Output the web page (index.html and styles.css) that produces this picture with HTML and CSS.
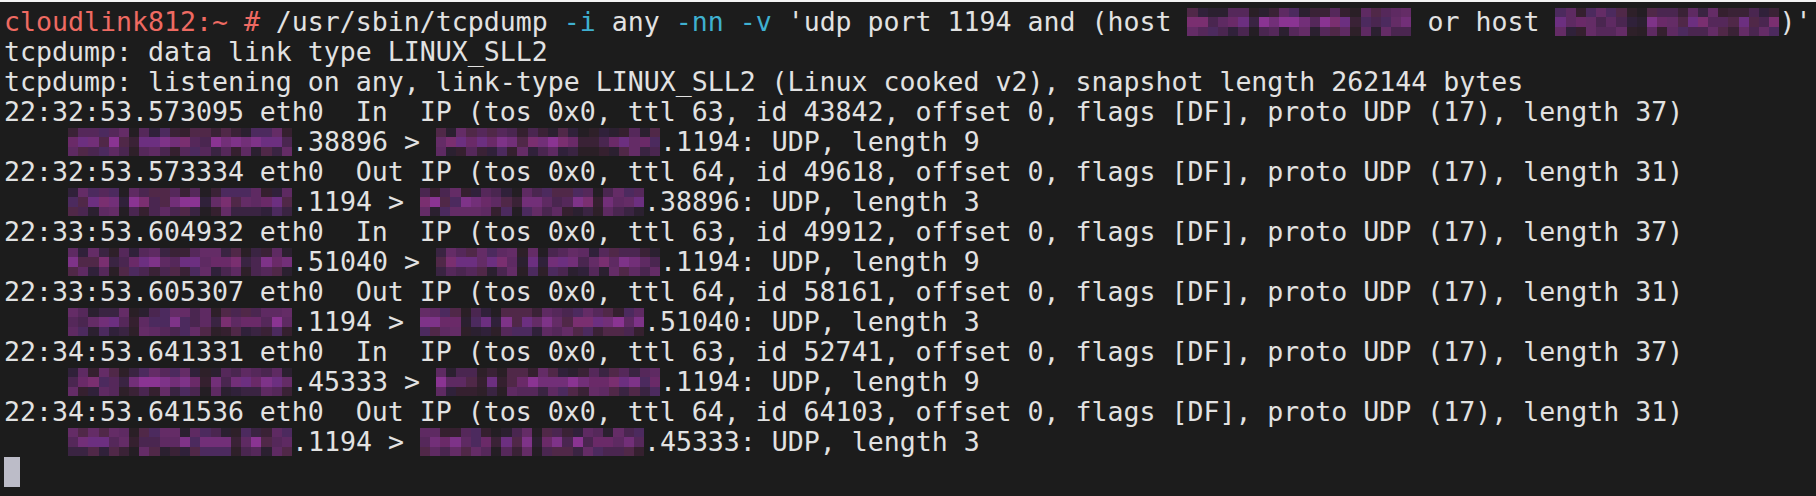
FILE: index.html
```html
<!DOCTYPE html>
<html lang="en">
<head>
<meta charset="utf-8">
<title>tcpdump</title>
<link rel="stylesheet" href="styles.css">
<script src="script.js" defer></script>
</head>
<body>
<main class="term">
<div class="line"><span class="prompt">cloudlink812:~ #</span> /usr/sbin/tcpdump <span class="opt">-i</span> any <span class="opt">-nn</span> <span class="opt">-v</span> 'udp port 1194 and (host <span class="redact" data-seed="11"></span> or host <span class="redact" data-seed="12"></span>)'</div>
<div class="line">tcpdump: data link type LINUX_SLL2</div>
<div class="line">tcpdump: listening on any, link-type LINUX_SLL2 (Linux cooked v2), snapshot length 262144 bytes</div>
<div class="line">22:32:53.573095 eth0  In  IP (tos 0x0, ttl 63, id 43842, offset 0, flags [DF], proto UDP (17), length 37)</div>
<div class="line">    <span class="redact" data-seed="21"></span>.38896 &gt; <span class="redact" data-seed="22"></span>.1194: UDP, length 9</div>
<div class="line">22:32:53.573334 eth0  Out IP (tos 0x0, ttl 64, id 49618, offset 0, flags [DF], proto UDP (17), length 31)</div>
<div class="line">    <span class="redact" data-seed="31"></span>.1194 &gt; <span class="redact" data-seed="32"></span>.38896: UDP, length 3</div>
<div class="line">22:33:53.604932 eth0  In  IP (tos 0x0, ttl 63, id 49912, offset 0, flags [DF], proto UDP (17), length 37)</div>
<div class="line">    <span class="redact" data-seed="41"></span>.51040 &gt; <span class="redact" data-seed="42"></span>.1194: UDP, length 9</div>
<div class="line">22:33:53.605307 eth0  Out IP (tos 0x0, ttl 64, id 58161, offset 0, flags [DF], proto UDP (17), length 31)</div>
<div class="line">    <span class="redact" data-seed="51"></span>.1194 &gt; <span class="redact" data-seed="52"></span>.51040: UDP, length 3</div>
<div class="line">22:34:53.641331 eth0  In  IP (tos 0x0, ttl 63, id 52741, offset 0, flags [DF], proto UDP (17), length 37)</div>
<div class="line">    <span class="redact" data-seed="61"></span>.45333 &gt; <span class="redact" data-seed="62"></span>.1194: UDP, length 9</div>
<div class="line">22:34:53.641536 eth0  Out IP (tos 0x0, ttl 64, id 64103, offset 0, flags [DF], proto UDP (17), length 31)</div>
<div class="line">    <span class="redact" data-seed="71"></span>.1194 &gt; <span class="redact" data-seed="72"></span>.45333: UDP, length 3</div>
<div class="line"><span class="cursor"></span></div>
</main>
</body>
</html>
```
FILE: styles.css
```css
html, body {
  margin: 0;
  padding: 0;
  background: #1c1c1c;
}

body {
  width: 1816px;
  height: 496px;
  overflow: hidden;
  border-top: 2px solid #f3f3f3;
  box-sizing: border-box;
}

.term {
  padding: 5px 0 0 4px;
  font-family: "DejaVu Sans Mono", "Liberation Mono", monospace;
  font-size: 26.576px;
  line-height: 30px;
  color: #e2e2e2;
}

.line {
  white-space: pre;
  height: 30px;
}

.prompt {
  color: #ee6a62;
}

.opt {
  color: #3fb0d0;
}

.redact {
  display: inline-grid;
  grid-template-columns: repeat(22, 1fr);
  grid-template-rows: repeat(3, 1fr);
  width: 224px;
  height: 28px;
  vertical-align: top;
  margin-top: 1px;
}

.cell {
  display: block;
}

.cursor {
  display: inline-block;
  width: 16px;
  height: 30px;
  vertical-align: top;
  background: #bcbcc8;
}
```
FILE: script.js
```js
(function () {
  function rng(seed) {
    var a = seed * 2654435761 >>> 0;
    return function () {
      a |= 0; a = a + 0x6D2B79F5 | 0;
      var t = Math.imul(a ^ a >>> 15, 1 | a);
      t = t + Math.imul(t ^ t >>> 7, 61 | t) ^ t;
      return ((t ^ t >>> 14) >>> 0) / 4294967296;
    };
  }
  var dark = ['#2b2030', '#30213a', '#3a2442', '#35202f', '#3a2236'];
  var mid = ['#4a2650', '#55285a', '#5e2a62', '#4c2a5e', '#642c66', '#502848'];
  var bright = ['#722f78', '#7e3388', '#8a3492', '#6c2f80', '#7a2f70', '#6a2a68'];
  var gap = ['#241e24', '#2a1f26', '#2e2029'];
  function pick(r, arr) { return arr[Math.floor(r() * arr.length)]; }
  var els = document.querySelectorAll('.redact');
  els.forEach(function (el) {
    var r = rng(parseInt(el.getAttribute('data-seed'), 10) || 1);
    var cols = 22;
    var gapCols = {};
    for (var g = 0; g < 2; g++) {
      gapCols[4 + Math.floor(r() * 14)] = true;
    }
    var html = '';
    for (var row = 0; row < 3; row++) {
      for (var c = 0; c < cols; c++) {
        var col;
        if (gapCols[c]) {
          col = row === 1 ? pick(r, dark) : pick(r, gap);
        } else if (row === 1) {
          col = r() < 0.6 ? pick(r, bright) : pick(r, mid);
        } else {
          col = r() < 0.7 ? pick(r, mid) : pick(r, dark);
        }
        html += '<span class="cell" style="background:' + col + '"></span>';
      }
    }
    el.innerHTML = html;
  });
})();
```
